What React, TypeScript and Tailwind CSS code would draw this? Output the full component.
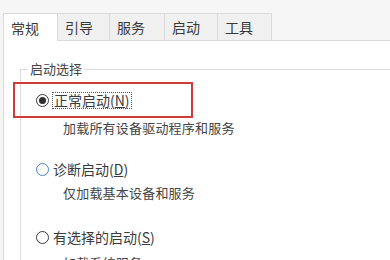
import React from "react";

const font = { fontFamily: '"Noto Sans CJK SC", "Noto Sans", sans-serif' };

function Radio({ checked, hover }: { checked?: boolean; hover?: boolean }) {
  return (
    <span
      className={
        "flex h-[13px] w-[13px] shrink-0 items-center justify-center rounded-full border bg-white " +
        (hover ? "border-[#4a86d0]" : "border-[#3a3a3a]")
      }
    >
      {checked && <span className="h-[7px] w-[7px] rounded-full bg-[#2f2f2f]" />}
    </span>
  );
}

export default function App() {
  const tabs = [
    { label: "常规", w: "w-[55px]" },
    { label: "引导", w: "w-[52px]" },
    { label: "服务", w: "w-[55px]" },
    { label: "启动", w: "w-[53px]" },
    { label: "工具", w: "w-[54px]" },
  ];
  return (
    <div
      className="relative h-[260px] w-[390px] overflow-hidden bg-[#f6f6f6] pl-[3px] pt-[13px] text-[#3a3a3a]"
      style={font}
    >
      <div className="flex h-[27px]">
        {tabs.map((t, i) => (
          <div
            key={t.label}
            className={
              t.w +
              " flex items-center border-t border-r border-[#dadada] pl-[7px] text-[14px] leading-[16px] " +
              (i === 0
                ? "relative z-10 h-[28px] border-l bg-white"
                : "h-[27px] bg-[#f0f0f0]")
            }
          >
            {t.label}
          </div>
        ))}
      </div>
      <div className="h-[300px] border-l border-t border-[#dadada] bg-white pl-[16px] pt-[20px]">
        <fieldset className="w-[420px] border border-[#dcdcdc] pl-[15px] pt-[14px]">
          <legend className="ml-[-8px] px-[2px] text-[13px] leading-[16px] text-[#444]">启动选择</legend>
          <div className="flex h-[18px] items-center gap-[3px]">
            <Radio checked />
            <span className="border border-dotted border-[#555] px-[1px] text-[14px] leading-[15px]">
              正常启动(<span className="underline">N</span>)
            </span>
          </div>
          <div className="ml-[27px] mt-[11px] text-[13px] leading-[16px] tracking-[0.2px] text-[#444]">
            加载所有设备驱动程序和服务
          </div>
          <div className="mt-[24px] flex h-[18px] items-center gap-[4px]">
            <Radio hover />
            <span className="text-[14px] leading-[16px]">
              诊断启动(<span className="underline">D</span>)
            </span>
          </div>
          <div className="ml-[27px] mt-[7px] text-[13px] leading-[16px] tracking-[0.2px] text-[#444]">
            仅加载基本设备和服务
          </div>
          <div className="mt-[27px] flex h-[18px] items-center gap-[4px]">
            <Radio />
            <span className="text-[14px] leading-[16px]">
              有选择的启动(<span className="underline">S</span>)
            </span>
          </div>
          <div className="ml-[27px] mt-[9px] text-[13px] leading-[16px] tracking-[0.2px] text-[#444]">
            加载系统服务
          </div>
        </fieldset>
      </div>
      <div className="absolute left-[13px] top-[82px] h-[36px] w-[180px] border-2 border-[#d03a3a]" />
    </div>
  );
}
